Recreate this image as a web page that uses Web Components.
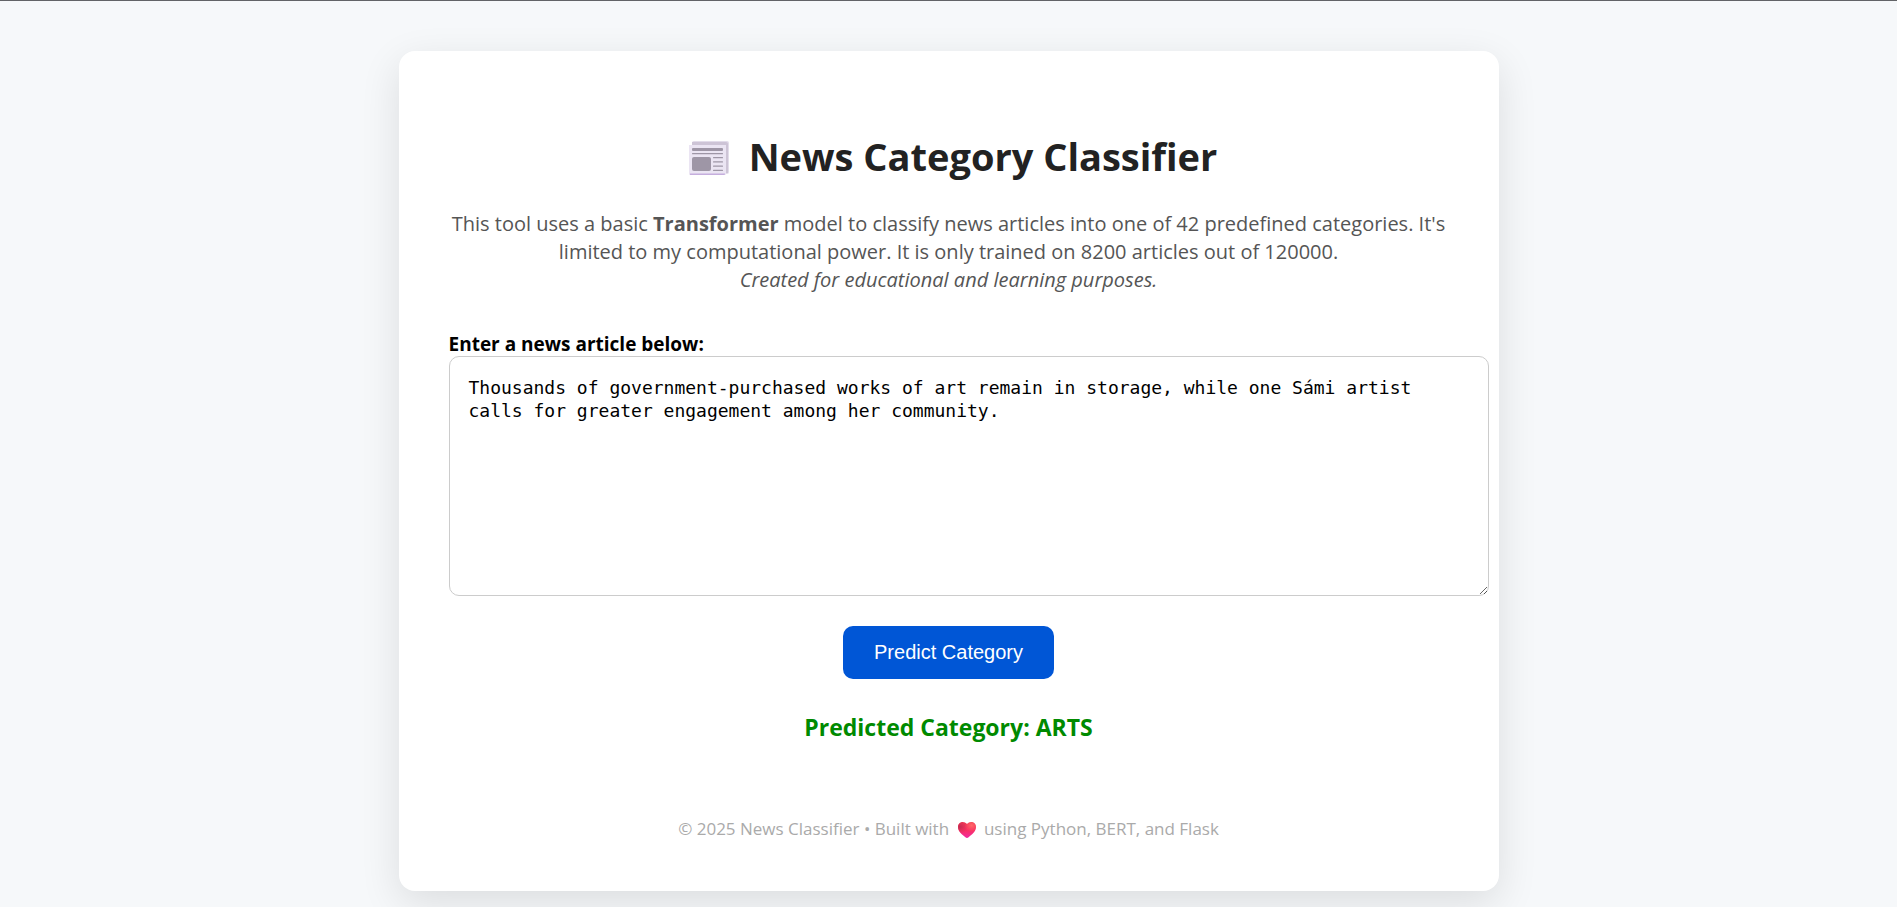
<!DOCTYPE html>
<html lang="en">
<head>
<meta charset="utf-8">
<meta name="viewport" content="width=device-width, initial-scale=1">
<title>News Category Classifier</title>
<style>
  html { background: #f6f8fa; }
  body {
    margin: 0;
    border-top: 1px solid #626367;
    font-family: "Open Sans", "Noto Sans", sans-serif;
    color: #000;
    overflow-x: hidden;
  }
</style>
</head>
<body>
<classifier-page></classifier-page>
<script>
class BaseElement extends HTMLElement {
  constructor() {
    super();
    this.attachShadow({ mode: 'open' }).innerHTML = this.constructor.markup;
  }
}

class NewspaperIcon extends BaseElement {
  static markup = `
    <style>
      :host { display: inline-flex; padding: 4px 0 0 9px; }
      svg { width: 40px; height: 34px; display: block; }
    </style>
    <svg viewBox="0 0 40 34" aria-hidden="true">
      <rect x="3" y="0" width="37" height="33" rx="2" fill="#e2dcea"/>
      <path d="M3 1h34a2 2 0 0 1 2 2v29h-2V4H3z" fill="#cdc4d6"/>
      <path d="M0 4h37v29a1 1 0 0 1-1 1H1a1 1 0 0 1-1-1z" fill="#ebe5f3"/>
      <path d="M1 32.600h35v.4a1 1 0 0 1-1 1H1z" fill="#c5aedd"/>
      <g fill="#9e96a6">
        <rect x="3" y="7" width="31" height="3" rx="1"/>
        <rect x="3" y="12" width="31" height="1.2" rx=".5"/>
        <rect x="3" y="16" width="19" height="14" rx="2"/>
        <rect x="24" y="16" width="10" height="1.2" rx=".5"/>
        <rect x="24" y="20.200" width="10" height="1.2" rx=".5"/>
        <rect x="24" y="24.500" width="10" height="1.2" rx=".5"/>
        <rect x="24" y="28.800" width="10" height="1.2" rx=".5"/>
      </g>
    </svg>`;
}

class HeartIcon extends BaseElement {
  static markup = `
    <style>
      :host { display: inline-flex; margin: 0 4px; vertical-align: -3px; }
      svg { width: 18px; height: 16px; display: block; }
    </style>
    <svg viewBox="0 0 18 16" role="img" aria-label="love">
      <defs>
        <linearGradient id="body" x1="0" y1="0" x2="0" y2="1">
          <stop offset="0" stop-color="#f03a50"/>
          <stop offset=".5" stop-color="#fa2f62"/>
          <stop offset="1" stop-color="#f029a0"/>
        </linearGradient>
        <radialGradient id="glow" cx=".76" cy=".22" r=".4">
          <stop offset="0" stop-color="#ff6a68"/>
          <stop offset="1" stop-color="#ff5a68" stop-opacity="0"/>
        </radialGradient>
        <radialGradient id="shade" cx=".1" cy=".3" r=".45">
          <stop offset="0" stop-color="#c22a50"/>
          <stop offset="1" stop-color="#d82c58" stop-opacity="0"/>
        </radialGradient>
        <path id="shape" d="M9 2C7.800.7 6.300 0 4.700 0 2 0 0 2.200 0 5c0 5 4.600 7.800 7.400 10.300.9.9 2.300.9 3.200 0C13.400 12.800 18 10 18 5c0-2.800-2-5-4.700-5C11.700 0 10.200.7 9 2z"/>
      </defs>
      <use href="#shape" fill="url(#body)"/>
      <use href="#shape" fill="url(#shade)"/>
      <use href="#shape" fill="url(#glow)"/>
    </svg>`;
}

class PageCard extends BaseElement {
  static markup = `
    <style>
      :host {
        display: block;
        box-sizing: border-box;
        max-width: 1100px;
        margin: 50px auto;
        padding: 50px;
        border-radius: 16px;
        background: #fff;
        box-shadow: 0 12px 40px rgba(0, 0, 0, .11);
      }
    </style>
    <slot></slot>`;
}

class PageHeader extends BaseElement {
  static markup = `
    <style>
      :host { display: block; text-align: center; }
      h1 {
        display: flex;
        align-items: center;
        justify-content: center;
        gap: 20px;
        margin: 27px 0 26px;
        font-size: 38px;
        line-height: 56px;
        color: #222;
      }
      p { margin: 0; font-size: 20px; line-height: 28px; color: #555; }
    </style>
    <h1><newspaper-icon></newspaper-icon><slot name="title"></slot></h1>
    <p><slot></slot></p>`;
}

class ArticleForm extends BaseElement {
  static markup = `
    <style>
      :host { display: block; margin-top: 38px; }
      form { display: flex; flex-direction: column; align-items: flex-start; }
      label { font-size: 19px; line-height: 24px; font-weight: 700; }
      textarea {
        width: 100%;
        height: 200px;
        margin: 0;
        padding: 19px;
        border: 1px solid #ccc;
        border-radius: 10px;
        font: 18px/23px "DejaVu Sans Mono", monospace;
        color: #000;
        resize: vertical;
        outline: 0;
      }
      button {
        align-self: center;
        margin-top: 30px;
        padding: 15px 31px;
        border: 0;
        border-radius: 10px;
        background: #0056d6;
        color: #fff;
        font: 20px/23px "Liberation Sans", Arial, sans-serif;
        cursor: pointer;
      }
    </style>
    <form>
      <label for="article">Enter a news article below:</label>
      <textarea id="article" name="article" spellcheck="false">Thousands of government-purchased works of art remain in storage, while one Sámi artist calls for greater engagement among her community.</textarea>
      <button type="button">Predict Category</button>
    </form>`;
}

class PredictionResult extends BaseElement {
  static markup = `
    <style>
      :host {
        display: block;
        margin-top: 32px;
        text-align: center;
        font-size: 23px;
        line-height: 32px;
        font-weight: 700;
        color: #008a00;
      }
    </style>
    <slot></slot>`;
}

class PageFooter extends BaseElement {
  static markup = `
    <style>
      :host { display: block; margin-top: 74px; text-align: center; font-size: 17px; line-height: 24px; color: #aaa; }
    </style>
    <footer><slot></slot></footer>`;
}

class ClassifierPage extends BaseElement {
  static markup = `
    <style>:host { display: flow-root; }</style>
    <page-card>
      <page-header>
        <span slot="title">News Category Classifier</span>
        This tool uses a basic <strong>Transformer</strong> model to classify news articles into one of 42 predefined categories. It's limited to my computational power. It is only trained on 8200 articles out of 120000.<br>
        <em>Created for educational and learning purposes.</em>
      </page-header>
      <article-form></article-form>
      <prediction-result>Predicted Category: ARTS</prediction-result>
      <page-footer>© 2025 News Classifier • Built with <heart-icon></heart-icon> using Python, BERT, and Flask</page-footer>
    </page-card>`;
}

customElements.define('newspaper-icon', NewspaperIcon);
customElements.define('heart-icon', HeartIcon);
customElements.define('page-card', PageCard);
customElements.define('page-header', PageHeader);
customElements.define('article-form', ArticleForm);
customElements.define('prediction-result', PredictionResult);
customElements.define('page-footer', PageFooter);
customElements.define('classifier-page', ClassifierPage);
</script>
</body>
</html>
